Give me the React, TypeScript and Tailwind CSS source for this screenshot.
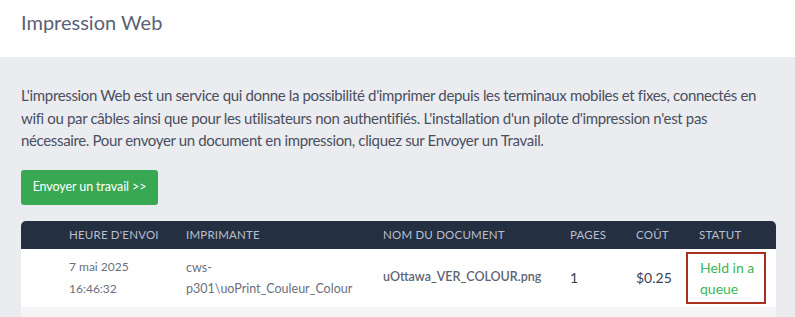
export default function App() {
  return (
    <div
      className="w-[795px] h-[317px] overflow-hidden bg-[#ebecf0]"
      style={{ fontFamily: "Lato, 'Open Sans', sans-serif" }}
    >
      <div className="h-[57px] bg-white flex items-center px-[21px]">
        <h1 className="text-[20px] text-[#5b6175] -mt-[13px]">Impression Web</h1>
      </div>
      <div className="px-[21px] pt-[27px]">
        <p className="text-[15px] leading-[22.5px] tracking-[-0.35px] text-[#4a4f5e]">
          L'impression Web est un service qui donne la possibilité d'imprimer depuis les terminaux mobiles et fixes,
          connectés en wifi ou par câbles ainsi que pour les utilisateurs non authentifiés. L'installation d'un pilote
          d'impression n'est pas nécessaire. Pour envoyer un document en impression, cliquez sur Envoyer un Travail.
        </p>
        <button className="mt-[18px] h-[35px] w-[137px] rounded-[3px] bg-[#38a852] text-white text-[12.5px] tracking-[-0.1px]">
          Envoyer un travail &gt;&gt;
        </button>
        <div className="mt-[16px] w-[755px]">
          <div className="h-[28px] bg-[#252f42] rounded-t-[5px] grid grid-cols-[48px_117px_197px_187px_66px_63px_1fr] items-center text-[11.5px] tracking-[0.2px] text-[#b9bfcc] uppercase">
            <span />
            <span>Heure d'envoi</span>
            <span>Imprimante</span>
            <span>Nom du document</span>
            <span>Pages</span>
            <span>Coût</span>
            <span>Statut</span>
          </div>
          <div className="h-[58px] bg-white grid grid-cols-[48px_117px_197px_187px_66px_50px_1fr] items-center text-[#6a6f7d]">
            <span />
            <div className="text-[12px] leading-[22px]">
              <div>7 mai 2025</div>
              <div>16:46:32</div>
            </div>
            <div className="text-[12.5px] leading-[21px]">
              <div>cws-</div>
              <div>p301\uoPrint_Couleur_Colour</div>
            </div>
            <div className="text-[12.5px] font-semibold text-[#5e6372]">uOttawa_VER_COLOUR.png</div>
            <div className="text-[14px] text-[#3d4250]">1</div>
            <div className="text-[14px] text-[#3d4250]">$0.25</div>
            <div className="flex">
              <div className="w-[80px] h-[52px] border-2 border-[#a4321f] pl-[12px] pt-[3px] text-[14px] leading-[21px] text-[#3cb55a]">
                Held in a queue
              </div>
            </div>
          </div>
          <div className="h-[20px] bg-[#f5f5f7]" />
        </div>
      </div>
    </div>
  );
}
